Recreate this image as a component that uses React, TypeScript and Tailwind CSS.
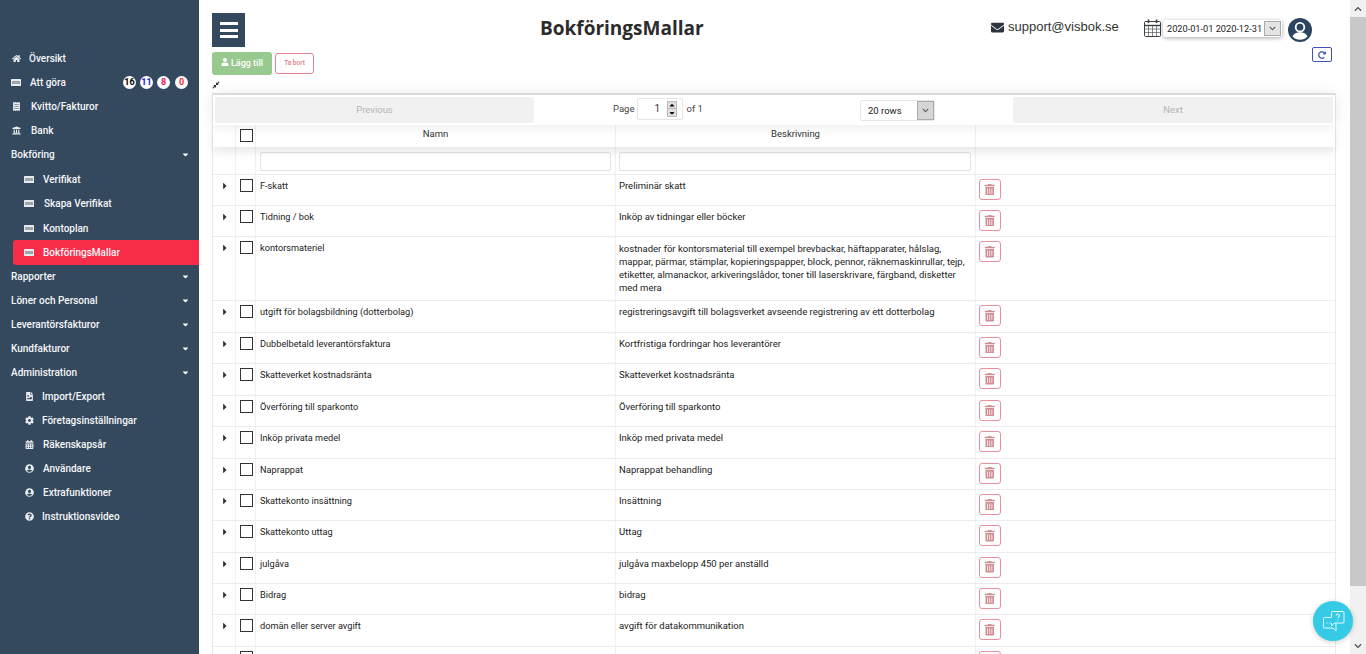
import React from "react";
import { FaHome, FaReceipt, FaUniversity, FaCaretDown, FaFileImage, FaCog, FaCalendarAlt, FaUserCircle, FaQuestionCircle, FaTrashAlt, FaEnvelope, FaUser, FaCaretRight, FaChevronDown, FaChevronUp, FaCaretUp, FaCompressAlt, FaRedoAlt } from "react-icons/fa";

const Bill = () => (
  <svg width="10" height="7" viewBox="0 0 10 7" className="shrink-0">
    <rect width="10" height="7" rx="0.5" fill="#e6ebef" />
    <rect x="1" y="2" width="8" height="3" fill="#000" opacity="0.3" />
  </svg>
);

const Item = ({ icon, label, x, sub, active, caret, right, cls }: any) => (
  <div className={`flex items-center relative text-[10px] font-medium text-[#f4f6f8] ${sub ? "pl-[24px]" : "pl-[11px]"} ${active ? "h-[25px] bg-[#f72d4a] rounded-l-[3px] ml-[13px] !pl-[11px]" : "h-[24px]"} ${cls ?? ""}`}>
    {icon && <span className="w-[10px] flex justify-center text-[9px] text-[#e8edf2]">{icon}</span>}
    <span style={{ marginLeft: x ?? 0 }} className="whitespace-nowrap">{label}</span>
    {caret && <FaCaretDown className="absolute left-[181px] top-[8px] text-[9px] text-white" />}
    {right}
  </div>
);

const Badge = ({ n, c }: { n: string; c: string }) => (
  <span className={`w-[13px] h-[13px] rounded-full bg-white flex items-center justify-center text-[9px] font-bold ${c}`}>{n}</span>
);

const rows: [string, string | string[], number][] = [
  ["F-skatt", "Preliminär skatt", 31.2],
  ["Tidning / bok", "Inköp av tidningar eller böcker", 31.2],
  ["kontorsmateriel", ["kostnader för kontorsmaterial till exempel brevbackar, häftapparater, hålslag,", "mappar, pärmar, stämplar, kopieringspapper, block, pennor, räknemaskinrullar, tejp,", "etiketter, almanackor, arkiveringslådor, toner till laserskrivare, färgband, disketter", "med mera"], 64],
  ["utgift för bolagsbildning (dotterbolag)", "registreringsavgift till bolagsverket avseende registrering av ett dotterbolag", 31.6],
  ["Dubbelbetald leverantörsfaktura", "Kortfristiga fordringar hos leverantörer", 31.4],
  ["Skatteverket kostnadsränta", "Skatteverket kostnadsränta", 31.4],
  ["Överföring till sparkonto", "Överföring till sparkonto", 31.4],
  ["Inköp privata medel", "Inköp med privata medel", 31.4],
  ["Naprappat", "Naprappat behandling", 31.4],
  ["Skattekonto insättning", "Insättning", 31.4],
  ["Skattekonto uttag", "Uttag", 31.4],
  ["julgåva", "julgåva maxbelopp 450 per anställd", 31.4],
  ["Bidrag", "bidrag", 31.4],
  ["domän eller server avgift", "avgift för datakommunikation", 31.4],
  ["mässa resor med", "resor som anges per person per dag", 31.4],
];

const Cols = ({ a, b, c, d, e, h, cls }: any) => (
  <div style={{ height: h }} className={`flex shrink-0 ${cls ?? ""}`}>
    <div className="w-[23px] shrink-0 border-r border-[#f1f1f1]">{a}</div>
    <div className="w-[20px] shrink-0 border-r border-[#f1f1f1]">{b}</div>
    <div className="w-[360px] shrink-0 border-r border-[#f1f1f1]">{c}</div>
    <div className="w-[360px] shrink-0 border-r border-[#f1f1f1]">{d}</div>
    <div className="flex-1">{e}</div>
  </div>
);

const Check = () => <div className="w-[13px] h-[13px] border border-[#333] ml-[4px] mt-[4px] bg-white" />;

export default function App() {
  return (
    <div className="w-[1366px] h-[654px] overflow-hidden flex bg-white text-[#111]" style={{ fontFamily: "Roboto, sans-serif" }}>
      <aside className="w-[199px] shrink-0 bg-[#34495e] pt-[46px] relative">
        <Item icon={<FaHome />} label="Översikt" x={8} />
        <Item icon={<Bill />} label="Att göra" x={9} right={
          <div className="absolute left-[123px] top-[6px] flex gap-[4px]">
            <Badge n="16" c="text-black" /><Badge n="11" c="text-[#1a1ae0]" /><Badge n="8" c="text-[#e6186d]" /><span className="ml-[1px]"><Badge n="0" c="text-[#f03030]" /></span>
          </div>} />
        <Item icon={<FaReceipt />} label="Kvitto/Fakturor" x={10} />
        <Item icon={<FaUniversity />} label="Bank" x={10} />
        <Item label="Bokföring" caret />
        <Item sub icon={<Bill />} label="Verifikat" x={9} cls="mt-[1px]" />
        <Item sub icon={<Bill />} label="Skapa Verifikat" x={10} />
        <Item sub icon={<Bill />} label="Kontoplan" x={9} cls="mt-[1px]" />
        <Item active icon={<Bill />} label="BokföringsMallar" x={9} />
        <Item label="Rapporter" caret cls="-mt-[1px]" />
        <Item label="Löner och Personal" caret />
        <Item label="Leverantörsfakturor" caret />
        <Item label="Kundfakturor" caret />
        <Item label="Administration" caret />
        <Item sub icon={<FaFileImage />} label="Import/Export" x={8} />
        <Item sub icon={<FaCog />} label="Företagsinställningar" x={8} />
        <Item sub icon={<FaCalendarAlt />} label="Räkenskapsår" x={9} />
        <Item sub icon={<FaUserCircle />} label="Användare" x={9} />
        <Item sub icon={<FaUserCircle />} label="Extrafunktioner" x={9} />
        <Item sub icon={<FaQuestionCircle />} label="Instruktionsvideo" x={8} />
      </aside>

      <main className="flex-1 min-w-0 pl-[13px] pt-[13px] relative">
        <header className="h-[34px] flex relative">
          <div className="w-[33px] h-[34px] bg-[#34495e] flex flex-col justify-center gap-[3.5px] pl-[8px] pr-[7px]">
            <span className="h-[3px] bg-white" /><span className="h-[3px] bg-white" /><span className="h-[3px] bg-white" />
          </div>
          <h1 className="absolute left-[328px] top-[2px] text-[19px] leading-[26px] font-bold text-[#2b2b2b] whitespace-nowrap" style={{ fontFamily: "'Open Sans', sans-serif" }}>BokföringsMallar</h1>
          <div className="absolute left-[779px] top-[5px] flex items-center gap-[4px] text-[13px] leading-[18px] text-[#333]" style={{ fontFamily: "'Liberation Sans', sans-serif" }}>
            <FaEnvelope className="text-[13px] text-[#2c3440]" /><span>support@visbok.se</span>
          </div>
          <svg width="17" height="18" viewBox="0 0 17 18" className="absolute left-[932px] top-[6px]" fill="none" stroke="#3a3f48">
            <rect x="0.5" y="2.5" width="16" height="15" rx="1" />
            <path d="M0.5 6.5h16" strokeWidth="1.4" />
            <path d="M0.5 10h16M0.5 13.5h16M4.5 6.5v11M8.5 6.5v11M12.5 6.5v11" strokeWidth="0.6" />
            <path d="M4.5 0.5v3.5M12.5 0.5v3.5" strokeWidth="1.6" />
          </svg>
          <div className="absolute left-[951px] top-[7px] w-[119px] h-[17px] bg-white rounded-[3px] shadow-[0_1px_4px_rgba(0,0,0,0.35)] flex items-center pl-[4px] text-[9.2px] text-[#222] whitespace-nowrap">
            2020-01-01 2020-12-31
            <span className="absolute right-[1px] top-[1px] w-[17px] h-[15px] bg-[#e4e4e4] border border-[#aaa] flex items-center justify-center"><FaChevronDown className="text-[7px] text-[#555]" /></span>
          </div>
          <svg width="24" height="24" viewBox="0 0 24 24" className="absolute left-[1076px] top-[5px]">
            <circle cx="12" cy="12" r="12" fill="#2c4560" />
            <circle cx="12" cy="9.2" r="4.3" fill="#2c4560" stroke="#fff" strokeWidth="1.8" />
            <path d="M4.5 18.5c1-3 4-4.2 7.5-4.2s6.500 1.200 7.500 4.200c-2 2.300-4.700 3.200-7.500 3.200s-5.500-.9-7.500-3.200z" fill="#fff" />
          </svg>
          <div className="absolute left-[1100px] top-[34px] w-[20px] h-[15px] border border-[#3f51b5] rounded-[2px] flex items-center justify-center"><FaRedoAlt className="text-[8px] text-[#3f51b5]" /></div>
        </header>

        <div className="flex gap-[3px] mt-[5px] h-[24px]">
          <button className="w-[60px] h-[23px] rounded-[3px] bg-[#98c98e] text-white text-[9px] font-medium flex items-center justify-center gap-[2px]"><FaUser className="text-[8px] -mt-[3px]" />Lägg till</button>
          <button className="w-[39px] h-[21px] mt-[1px] rounded-[3px] border border-[#e8808f] bg-white text-[#ea7a8c] text-[6.5px] font-medium">Ta bort</button>
        </div>
        <div className="h-[17px] pt-[5px]"><FaCompressAlt className="text-[8px] text-[#333]" /></div>

        <div className="w-[1124px] h-[600px] border-[1px] border-[#e9e9e9] border-t-[2px] border-t-[#e4e4e4] text-[9.5px] leading-[12px] relative">
          <div className="h-[30px] flex items-center relative z-10 shadow-[0_0_15px_rgba(0,0,0,0.1)] bg-white pl-[2px]">
            <div className="w-[319px] h-[26px] bg-[#f1f1f1] rounded-[2px] text-[#b4b4b4] flex items-center justify-center">Previous</div>
            <div className="absolute left-[400px] top-[3px] flex items-center text-[#444]">
              Page
              <span className="ml-[3px] w-[46px] h-[22px] border border-[#e6e6e6] rounded-[2px] relative flex items-center pl-[16px] text-[#333] text-[10px]">1
                <span className="absolute right-[5px] top-[2px] w-[10px] flex flex-col">
                  <span className="h-[8px] bg-[#e0e0e0] border border-[#bbb] flex items-center justify-center"><FaCaretUp className="text-[8px] text-black" /></span>
                  <span className="h-[8px] bg-[#e0e0e0] border border-t-0 border-[#bbb] flex items-center justify-center"><FaCaretDown className="text-[8px] text-black" /></span>
                </span>
              </span>
              <span className="ml-[3px]">of 1</span>
            </div>
            <div className="absolute left-[647px] top-[5px] w-[75px] h-[21px] border border-[#e6e6e6] rounded-[2px] flex items-center pl-[7px] text-[#222]">20 rows
              <span className="absolute right-0 top-0 w-[17px] h-[19px] bg-[#d6d6d6] border border-[#aaa] flex items-center justify-center"><FaChevronDown className="text-[7px] text-[#555]" /></span>
            </div>
            <div className="absolute left-[800px] top-[2px] w-[320px] h-[26px] bg-[#f1f1f1] rounded-[2px] text-[#b4b4b4] flex items-center justify-center">Next</div>
          </div>
          <Cols h={22} cls="shadow-[0_5px_8px_rgba(0,0,0,0.09)] relative"
            b={<Check />}
            c={<div className="text-center text-[#333] pt-[3px]">Namn</div>}
            d={<div className="text-center text-[#333] pt-[3px]">Beskrivning</div>} />
          <Cols h={28} cls="border-b border-[#ececec]"
            c={<div className="mx-[4px] mt-[5px] h-[19px] border border-[#e2e2e2] rounded-[2px]" />}
            d={<div className="ml-[3px] mr-[4px] mt-[5px] h-[19px] border border-[#e2e2e2] rounded-[2px]" />} />
          {rows.map(([name, desc, h], i) => (
            <Cols key={i} h={h} cls="border-b border-[#ececec]"
              a={<FaCaretRight className="text-[10px] text-[#333] ml-[7px] mt-[6px]" />}
              b={<Check />}
              c={<div className="pl-[4px] pt-[5px] text-[#222] text-[9.2px] whitespace-nowrap">{name}</div>}
              d={<div className="pl-[3px] pt-[5px] text-[#222] whitespace-nowrap">{Array.isArray(desc) ? desc.map((l) => <div key={l} className="leading-[13px]">{l}</div>) : desc}</div>}
              e={<div className="ml-[3px] mt-[4px] w-[22px] h-[21px] border border-[#e8909c] rounded-[3px] flex items-center justify-center"><FaTrashAlt className="text-[11.5px] text-[#d08f93]" /></div>} />
          ))}
        </div>

        <div className="absolute left-[1114px] top-[601px] w-[40px] h-[40px] rounded-full bg-[#35cbe6] shadow-[0_1px_5px_rgba(0,0,0,0.2)] flex items-center justify-center">
          <svg width="22" height="21" viewBox="0 0 22 21" fill="none" stroke="#e6f9fd" strokeWidth="1" className="ml-[2px]">
            <path d="M8.5 6V1.5a1 1 0 0 1 1-1h10.500a1 1 0 0 1 1 1V11a1 1 0 0 1-1 1H11.500l-3 3v-3" />
            <path d="M8.5 6.500H1.500a1 1 0 0 0-1 1V16a1 1 0 0 0 1 1H10l3 3v-3V12" />
            <path d="M13.200 4.600a1.600 1.600 0 1 1 2.300 1.500l-.5.8" strokeWidth="1.100" />
            <circle cx="15" cy="9" r=".6" fill="#fff" stroke="none" />
            <path d="M3.500 12h1M6.500 12h1" />
          </svg>
        </div>
      </main>

      <div className="w-[16px] shrink-0 bg-[#f1f1f1] flex flex-col items-center">
        <div className="h-[17px] flex items-center justify-center"><FaChevronUp className="text-[8px] text-[#505050]" /></div>
        <div className="w-full h-[569px] bg-[#c8c8c8]" />
        <div className="flex-1" />
        <div className="h-[17px] flex items-center justify-center"><FaChevronDown className="text-[8px] text-[#505050]" /></div>
      </div>
    </div>
  );
}
